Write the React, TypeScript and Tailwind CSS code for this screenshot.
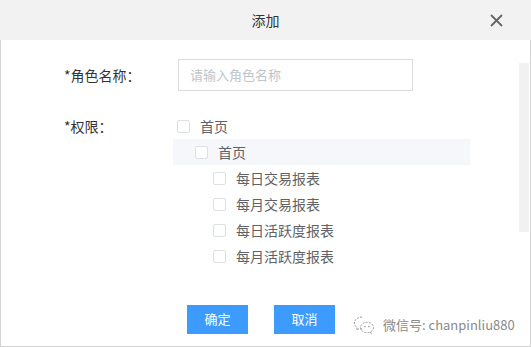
import React from "react";

// Role editor dialog — "添加" (add role) with permission tree.
const font = { fontFamily: '"Noto Sans CJK SC", "Noto Sans", sans-serif' };

type Node = { label: string; level: number; active?: boolean };

const nodes: Node[] = [
  { label: "首页", level: 0 },
  { label: "首页", level: 1, active: true },
  { label: "每日交易报表", level: 2 },
  { label: "每月交易报表", level: 2 },
  { label: "每日活跃度报表", level: 2 },
  { label: "每月活跃度报表", level: 2 },
];

function TreeRow({ node }: { node: Node }) {
  const indent =
    node.level === 0 ? "pl-[4px]" : node.level === 1 ? "pl-[22px]" : "pl-[40px]";
  return (
    <div
      className={`h-[26px] flex items-center ${indent} ${
        node.active ? "bg-[#f5f7fa]" : ""
      }`}
    >
      <span className="w-[13px] h-[13px] border border-[#dcdfe6] rounded-[2px] bg-white" />
      <span className="ml-[10px] text-[14px] text-[#606266]">{node.label}</span>
    </div>
  );
}

function WechatMark() {
  return (
    <svg width="22" height="20" viewBox="0 0 22 20" fill="none" stroke="#9a9a9a" strokeWidth="1" strokeDasharray="2 1.2">
      <path d="M9 2C4.6 2 1.5 4.8 1.5 8c0 1.9 1 3.5 2.6 4.6L3.5 15l2.7-1.4c.9.3 1.8.4 2.8.4" />
      <ellipse cx="14" cy="12.5" rx="6.5" ry="5.2" />
      <path d="M17.5 17l1 2" />
      <circle cx="12" cy="11.5" r=".5" fill="#9a9a9a" />
      <circle cx="16" cy="11.5" r=".5" fill="#9a9a9a" />
    </svg>
  );
}

export default function App() {
  return (
    <div className="w-[531px] h-[347px] bg-white relative flex flex-col" style={font}>
      <header className="h-[40px] bg-[#f2f2f2] flex items-center justify-center relative shrink-0">
        <span className="text-[14px] text-[#333]">添加</span>
        <svg
          className="absolute left-[490px] top-[14px]"
          width="13"
          height="13"
          viewBox="0 0 13 13"
          stroke="#666"
          strokeWidth="1.8"
        >
          <path d="M1 1l11 11M12 1L1 12" />
        </svg>
      </header>

      <div className="flex-1 border-l border-r border-b border-[#d4d4d4] flex flex-col pt-[19px]">
        <div className="flex items-center">
          <label className="w-[177px] pl-[63px] text-[14px] text-[#333]">*角色名称：</label>
          <div className="w-[235px] h-[32px] border border-[#dcdcdc] flex items-center px-[11px] text-[13px] text-[#c0c4cc]">
            请输入角色名称
          </div>
        </div>

        <div className="flex mt-[22px]">
          <label className="w-[172px] pl-[63px] text-[14px] text-[#333] leading-[26px]">*权限：</label>
          <div className="w-[297px]">
            {nodes.map((n, i) => (
              <TreeRow key={i} node={n} />
            ))}
          </div>
        </div>

        <div className="flex items-center mt-[34px] pl-[186px]">
          <button className="w-[61px] h-[29px] bg-[#3d9bfe] text-white text-[13px]">确定</button>
          <button className="w-[61px] h-[29px] bg-[#3d9bfe] text-white text-[13px] ml-[26px]">取消</button>
          <div className="ml-[18px] mt-[12px] flex items-center gap-[8px] text-[13px] text-[#8a8a8a]">
            <WechatMark />
            <span>微信号: chanpinliu880</span>
          </div>
        </div>
      </div>

      <div className="absolute left-[519px] top-[63px] w-[10px] h-[169px] bg-[#f1f1f1]" />
    </div>
  );
}
